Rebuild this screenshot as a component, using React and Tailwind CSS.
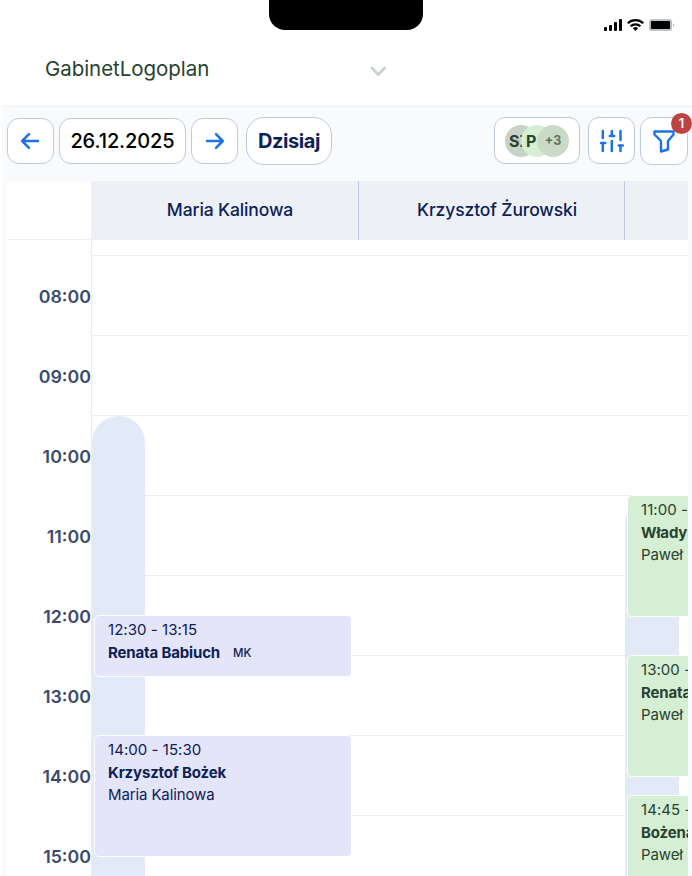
import React from "react";

const HOURS = ["08:00", "09:00", "10:00", "11:00", "12:00", "13:00", "14:00", "15:00"];

function ArrowIcon({ flip }) {
  return (
    <svg width="20" height="18" viewBox="0 0 20 18" fill="none" stroke="#1d72e8" strokeWidth="2.5" strokeLinecap="round" strokeLinejoin="round" className={flip ? "rotate-180" : "-ml-px"}>
      <path d="M18 9H2.500M9 2.200L2.200 9l6.800 6.800" />
    </svg>
  );
}

function StatusIcons() {
  return (
    <svg width="72" height="14" viewBox="0 0 72 14">
      <g fill="#000">
        <rect x="0" y="9" width="3" height="4" rx="1" />
        <rect x="5" y="7" width="3" height="6" rx="1" />
        <rect x="10" y="4" width="3" height="9" rx="1" />
        <rect x="15" y="1" width="3" height="12" rx="1" />
        <path d="M31.500 13l-2.600-2.700a3.800 3.800 0 0 1 5.200 0z" />
      </g>
      <g fill="none" stroke="#000" strokeWidth="2.200">
        <path d="M23.800 5.200a11 11 0 0 1 15.400 0" />
        <path d="M26.600 8.300a7 7 0 0 1 9.800 0" />
      </g>
      <rect x="46" y="2" width="21" height="10" rx="2" fill="#fff" stroke="#a9b1ba" strokeWidth="1.700" />
      <rect x="47" y="3" width="19" height="8" rx="1" fill="#000" />
      <path d="M69 5.200c1.700.600 1.700 3 0 3.600z" fill="#a9b1ba" />
    </svg>
  );
}

function Event({ className, time, name, person, initials }) {
  return (
    <div className={`absolute overflow-hidden whitespace-nowrap rounded-[5px] border border-white pl-[13px] pt-[3px] text-[15px] ${className}`}>
      <div className="leading-[22px] tracking-[0.05px]">{time}</div>
      <div className="flex items-center pt-px font-bold leading-[22px] tracking-[-0.15px]">
        {name}
        {initials && <span className="-mt-px ml-[13px] text-[11.5px] font-medium tracking-normal">{initials}</span>}
      </div>
      {person && <div className="leading-[22px] tracking-[-0.12px]">{person}</div>}
    </div>
  );
}

function GridLines() {
  return (
    <div>
      <div className="h-4 border-b border-[#eeeff2]" />
      {HOURS.map((h) => (
        <div key={h} className="h-20 border-b border-[#eeeff2]" />
      ))}
    </div>
  );
}

export default function App() {
  return (
    <div className="flex h-[876px] w-[692px] flex-col overflow-hidden bg-white font-['Inter',sans-serif]">
      <header className="flex h-[106px] flex-col">
        <div className="flex h-[38px] items-start">
          <div className="ml-[269px] h-[30px] w-[154px] rounded-b-[16px] bg-black" />
          <div className="ml-[181px] mt-[18px]">
            <StatusIcons />
          </div>
        </div>
        <div className="flex h-[62px] items-center pl-[45px]">
          <div className="w-[325px] text-[20.5px] tracking-[-0.05px] text-[#29422f]">GabinetLogoplan</div>
          <svg width="17" height="11" viewBox="0 0 17 11" fill="none" stroke="#c9d5cc" strokeWidth="3" strokeLinecap="round" strokeLinejoin="round" className="mt-1">
            <path d="M2 2l6.300 6.500L14.600 2" />
          </svg>
        </div>
      </header>

      <main className="ml-[2px] flex min-h-0 flex-1 flex-col border-t border-[#edf0f3] bg-[#f8fafc]">
        <div className="flex h-[74px] shrink-0 items-start pl-[5px] pt-[10px]">
          <button className="mt-px flex h-[46px] w-[47px] items-center justify-center rounded-[12px] border border-[#bfcadf] bg-white">
            <ArrowIcon />
          </button>
          <button className="ml-[5px] mt-px flex h-[46px] w-[127px] items-center justify-center rounded-[12px] border border-[#bfcadf] bg-white text-[20px] font-medium tracking-[-0.1px] text-black">
            26.12.2025
          </button>
          <button className="ml-[5px] mt-px flex h-[46px] w-[47px] items-center justify-center rounded-[12px] border border-[#bfcadf] bg-white">
            <ArrowIcon flip />
          </button>
          <button className="ml-[8px] flex h-[48px] w-[86px] items-center justify-center rounded-[18px] border border-[#bfcadf] bg-white text-[20px] font-bold tracking-[-0.4px] text-[#0c2156]">
            Dzisiaj
          </button>
          <button className="ml-[162px] flex h-[47px] w-[86px] items-center rounded-[11px] border border-[#bfcadf] bg-white pl-[10px]">
            <span className="-mr-4 flex h-8 w-8 items-center rounded-full bg-[#c8d3c8] pl-[4px]">
              <span className="w-[13px] overflow-hidden text-left text-[16px] font-bold text-[#29422f]">SZ</span>
            </span>
            <span className="-mr-4 flex h-8 w-8 items-center rounded-full bg-[#d5efd5] pl-[5px] text-[16px] font-bold text-[#29422f]">P</span>
            <span className="flex h-8 w-8 items-center justify-center rounded-full bg-[#cbdac6] pt-px text-[12.500px] font-bold text-[#57745c]">+3</span>
          </button>
          <button className="ml-[8px] flex h-[47px] w-[47px] items-center justify-center rounded-[11px] border border-[#bfcadf] bg-white">
            <svg width="24" height="24" viewBox="0 0 24 24" fill="none" stroke="#1d72e8" strokeWidth="2.500" strokeLinecap="round">
              <path d="M2.800 2v7M1.200 14h4M2.800 14v8M11.800 2v4.500M9.800 7h4.400M11.800 12v10M20.500 2v9M18.700 16.500h4M20.500 16.500V22" />
            </svg>
          </button>
          <button className="relative ml-[5px] flex h-[48px] w-[48px] items-center justify-center rounded-[12px] border border-[#bfcadf] bg-white">
            <svg width="22" height="24" viewBox="0 0 22 24" fill="none" stroke="#1d72e8" strokeWidth="2.400" strokeLinejoin="round">
              <path d="M1.500 2.500h19v3l-5.500 6.500v8.500l-7 2V12l-6.500-6.500z" />
            </svg>
            <span className="absolute -right-[5px] -top-[5px] flex h-[21px] w-[21px] items-center justify-center rounded-full bg-[#bd4343] text-[13px] font-semibold text-white">1</span>
          </button>
        </div>

        <section className="ml-[5px] mr-[4px] flex min-h-0 flex-1 flex-col overflow-hidden bg-white">
          <div className="flex h-[59px] shrink-0 text-[17.500px] font-medium tracking-[-0.120px] text-[#0c2156]">
            <div className="w-[84px] shrink-0 border-b border-[#edf0f3]" />
            <div className="flex w-[268px] shrink-0 items-center justify-center border-r border-[#bfcadf] bg-[#edf1f6] pl-[11px]">Maria Kalinowa</div>
            <div className="flex w-[266px] shrink-0 items-center justify-center border-r border-[#bfcadf] bg-[#edf1f6] pl-[11px]">Krzysztof Żurowski</div>
            <div className="flex-1 bg-[#edf1f6]" />
          </div>

          <div className="flex min-h-0 flex-1">
            <div className="w-[85px] shrink-0 border-r border-[#e9edf2] pt-[17px] text-right text-[17.800px] font-semibold text-[#3b4b6b]">
              {HOURS.map((h) => (
                <div key={h} className="flex h-20 items-center justify-end">
                  {h}
                </div>
              ))}
            </div>

            <div className="relative w-[266px] shrink-0">
              <GridLines />
              <div className="absolute left-0 top-[176px] h-[480px] w-[53px] rounded-t-[27px] bg-[#e3eaf7]" />
              <Event className="left-[2px] top-[375px] h-[62px] w-[258px] bg-[#e5e5f9] text-[#0c2156]" time="12:30 - 13:15" name="Renata Babiuch" initials="MK" />
              <Event className="left-[2px] top-[495px] h-[122px] w-[258px] bg-[#e5e5f9] text-[#0c2156]" time="14:00 - 15:30" name="Krzysztof Bożek" person="Maria Kalinowa" />
            </div>

            <div className="w-[267px] shrink-0">
              <GridLines />
            </div>

            <div className="relative min-w-0 flex-1 overflow-hidden">
              <GridLines />
              <div className="absolute left-0 top-[256px] h-[400px] w-[54px] rounded-t-[27px] bg-[#e3eaf7]" />
              <Event className="left-[2px] top-[255px] h-[122px] w-[258px] bg-[#d5efd5] text-[#29422f]" time="11:00 - 12:30" name="Władysław" person="Paweł" />
              <Event className="left-[2px] top-[415px] h-[122px] w-[258px] bg-[#d5efd5] text-[#29422f]" time="13:00 - 14:30" name="Renata" person="Paweł" />
              <Event className="left-[2px] top-[555px] h-[122px] w-[258px] bg-[#d5efd5] text-[#29422f]" time="14:45 - 16:15" name="Bożena" person="Paweł" />
            </div>
          </div>
        </section>
      </main>
    </div>
  );
}
